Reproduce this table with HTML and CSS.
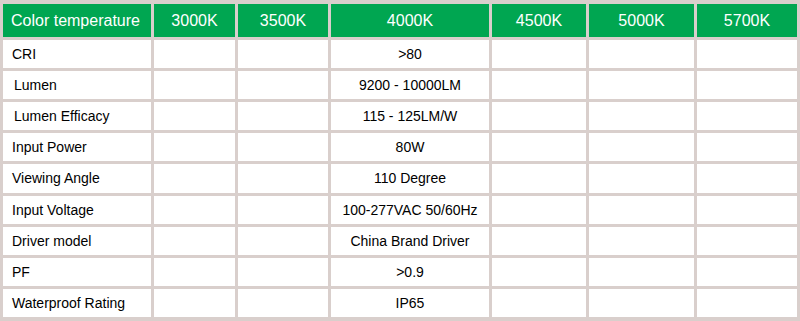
FILE: index.html
```html
<!DOCTYPE html>
<html lang="en">
<head>
    <meta charset="UTF-8">
    <meta name="viewport" content="width=device-width, initial-scale=1.0">
    <title>Specifications</title>
    <link rel="stylesheet" href="styles.css">
</head>
<body>
    <table class="spec-table">
        <colgroup>
            <col class="col-name">
            <col class="col-3000">
            <col class="col-3500">
            <col class="col-4000">
            <col class="col-4500">
            <col class="col-5000">
            <col class="col-5700">
        </colgroup>
        <thead>
            <tr>
                <th class="name">Color temperature</th>
                <th>3000K</th>
                <th>3500K</th>
                <th>4000K</th>
                <th>4500K</th>
                <th>5000K</th>
                <th>5700K</th>
            </tr>
        </thead>
        <tbody>
            <tr><td class="name">CRI</td><td></td><td></td><td>&gt;80</td><td></td><td></td><td></td></tr>
            <tr><td class="name indent">Lumen</td><td></td><td></td><td>9200 - 10000LM</td><td></td><td></td><td></td></tr>
            <tr><td class="name indent">Lumen Efficacy</td><td></td><td></td><td>115 - 125LM/W</td><td></td><td></td><td></td></tr>
            <tr><td class="name">Input Power</td><td></td><td></td><td>80W</td><td></td><td></td><td></td></tr>
            <tr><td class="name">Viewing Angle</td><td></td><td></td><td>110 Degree</td><td></td><td></td><td></td></tr>
            <tr><td class="name">Input Voltage</td><td></td><td></td><td>100-277VAC 50/60Hz</td><td></td><td></td><td></td></tr>
            <tr><td class="name">Driver model</td><td></td><td></td><td>China Brand Driver</td><td></td><td></td><td></td></tr>
            <tr><td class="name">PF</td><td></td><td></td><td>&gt;0.9</td><td></td><td></td><td></td></tr>
            <tr><td class="name">Waterproof Rating</td><td></td><td></td><td>IP65</td><td></td><td></td><td></td></tr>
        </tbody>
    </table>
</body>
</html>
```
FILE: styles.css
```css
body {
    margin: 0;
    font-family: "Liberation Sans", Arial, sans-serif;
    background-color: #fff;
}

.spec-table {
    width: 800px;
    height: 321px;
    table-layout: fixed;
    border-collapse: separate;
    border-spacing: 3px;
    padding: 1px 0;
    background-color: #d9cfcc;
}

.col-name { width: 148px; }
.col-3000 { width: 81px; }
.col-3500 { width: 90px; }
.col-4000 { width: 158px; }
.col-4500 { width: 94px; }
.col-5000 { width: 105px; }
.col-5700 { width: 100px; }

th {
    height: 33px;
    padding: 0;
    background-color: #00a651;
    color: #fff;
    font-size: 16px;
    font-weight: normal;
    text-align: center;
}
th.name {
    text-align: left;
    padding-left: 8px;
}

td {
    height: 28px;
    padding: 0;
    background-color: #fff;
    color: #000;
    font-size: 14px;
    text-align: center;
}
td.name {
    text-align: left;
    padding-left: 9px;
}
td.indent {
    padding-left: 11px;
}
```
